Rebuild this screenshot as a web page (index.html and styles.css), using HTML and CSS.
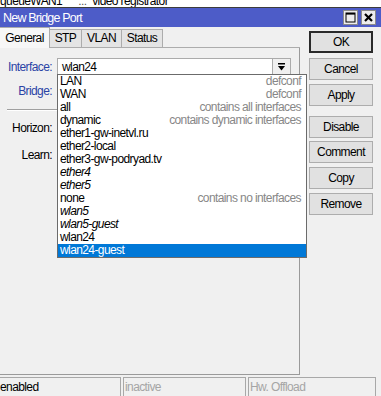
FILE: index.html
```html
<!DOCTYPE html>
<html lang="en">
<head>
  <meta charset="UTF-8">
  <title>New Bridge Port</title>
  <link rel="stylesheet" href="styles.css">
</head>
<body>
  <!-- window behind, only a sliver is visible -->
  <div class="backdrop">
    <span class="bg-name">queueWAN1</span><span class="bg-dots">:::</span><span class="bg-comment">video registrator</span>
  </div>

  <div class="window">
    <!-- Title bar -->
    <div class="titlebar">
      <span class="title">New Bridge Port</span>
      <div class="title-btns">
        <span class="tbtn">
          <svg width="11" height="11" viewBox="0 0 11 11"><rect x="1" y="1" width="9" height="9" fill="none" stroke="#000" stroke-width="1"/><line x1="1" y1="1.8" x2="10" y2="1.8" stroke="#000" stroke-width="1.6"/></svg>
        </span>
        <span class="tbtn">
          <svg width="11" height="11" viewBox="0 0 11 11"><path d="M2 2 L9 9 M9 2 L2 9" stroke="#000" stroke-width="2.2"/></svg>
        </span>
      </div>
    </div>

    <div class="main">
      <div class="left">
        <!-- Tabs -->
        <div class="tabs">
          <div class="tab active tab-general">General</div>
          <div class="tab tab-stp">STP</div>
          <div class="tab tab-vlan">VLAN</div>
          <div class="tab tab-status">Status</div>
          <div class="tab-fill"></div>
        </div>

        <!-- General tab -->
        <div class="panel">
          <div class="row row-interface">
            <label class="lbl blue">Interface:</label>
            <div class="combo">
              <div class="field">wlan24</div>
              <div class="drop">
                <svg width="9" height="9" viewBox="0 0 9 9"><rect x="1" y="0" width="7" height="1.5" fill="#000"/><path d="M1 3 L8 3 L4.5 7.5 Z" fill="#000"/></svg>
              </div>
            </div>
          </div>
          <div class="row row-bridge">
            <label class="lbl blue">Bridge:</label>
            <div class="combo">
              <div class="field"></div>
              <div class="drop"></div>
            </div>
          </div>
          <div class="sep"></div>
          <div class="row row-horizon">
            <label class="lbl">Horizon:</label>
            <div class="field short"></div>
          </div>
          <div class="row">
            <label class="lbl">Learn:</label>
            <div class="field short"></div>
          </div>

          <!-- open interface list -->
          <ul class="iface-list">
            <li class="iface"><span>LAN</span><span class="note">defconf</span></li>
            <li class="iface"><span>WAN</span><span class="note">defconf</span></li>
            <li class="iface"><span>all</span><span class="note">contains all interfaces</span></li>
            <li class="iface"><span>dynamic</span><span class="note">contains dynamic interfaces</span></li>
            <li class="iface"><span>ether1-gw-inetvl.ru</span></li>
            <li class="iface"><span>ether2-local</span></li>
            <li class="iface"><span>ether3-gw-podryad.tv</span></li>
            <li class="iface slave"><span>ether4</span></li>
            <li class="iface slave"><span>ether5</span></li>
            <li class="iface"><span>none</span><span class="note">contains no interfaces</span></li>
            <li class="iface slave"><span>wlan5</span></li>
            <li class="iface slave"><span>wlan5-guest</span></li>
            <li class="iface"><span>wlan24</span></li>
            <li class="iface selected"><span>wlan24-guest</span></li>
          </ul>
        </div>
      </div>

      <!-- Dialog buttons -->
      <div class="buttons">
        <div class="btn btn-ok">OK</div>
        <div class="btn btn-cancel">Cancel</div>
        <div class="btn btn-apply">Apply</div>
        <div class="btn btn-disable">Disable</div>
        <div class="btn btn-comment">Comment</div>
        <div class="btn btn-copy">Copy</div>
        <div class="btn btn-remove">Remove</div>
      </div>
    </div>

    <!-- Status bar -->
    <div class="statusbar">
      <div class="status status-enabled">enabled</div>
      <div class="status status-inactive dim">inactive</div>
      <div class="status status-hw dim">Hw. Offload</div>
    </div>
  </div>
</body>
</html>
```

FILE: styles.css
```css
html, body {
  margin: 0;
  padding: 0;
}

body {
  width: 381px;
  height: 396px;
  overflow: hidden;
  background-color: #f0f0f0;
  font-family: "Liberation Sans", Arial, sans-serif;
  font-size: 12px;
  letter-spacing: -0.6px;
  color: #000;
}

/* sliver of the window behind */
.backdrop {
  height: 7px;
  overflow: hidden;
  background-color: #fff;
  white-space: nowrap;
}

.backdrop span {
  display: inline-block;
  line-height: 12px;
  margin-top: -5px;
  vertical-align: top;
}

.bg-dots {
  margin-left: 16px;
  width: 14px;
  color: #555;
}

.window {
  border-top: 1px solid #3c3c3c;
}

.titlebar {
  height: 19px;
  background-color: #4d5cc8;
  display: flex;
  align-items: center;
  justify-content: space-between;
  padding: 0 5px 0 3px;
}

.title {
  color: #fff;
  letter-spacing: -0.8px;
  font-size: 12.5px;
}

.title-btns {
  display: flex;
  gap: 3px;
}

.tbtn {
  width: 15px;
  height: 15px;
  box-sizing: border-box;
  background-color: #ededed;
  border: 1px solid #8a8a8a;
  display: flex;
  align-items: center;
  justify-content: center;
}

.main {
  display: flex;
}

.left {
  width: 300px;
}

/* tabs */
.tabs {
  display: flex;
  align-items: flex-end;
  height: 21px;
}

.tab {
  box-sizing: border-box;
  height: 19px;
  line-height: 17px;
  text-align: center;
  background-color: #e4e4e4;
  border: 1px solid #acacac;
  border-left: none;
}

.tab.active {
  height: 21px;
  line-height: 20px;
  background-color: #f7f7f7;
  border-bottom: none;
}

.tab-general { width: 50px; }
.tab-stp { width: 32px; }
.tab-vlan { width: 40px; }
.tab-status { width: 41px; }

.tab-fill {
  flex: 1;
  border-bottom: 1px solid #acacac;
  border-right: 1px solid #acacac;
  height: 0;
}

.panel {
  position: relative;
  box-sizing: border-box;
  height: 327px;
  padding-top: 10px;
  border-right: 1px solid #9a9a9a;
  border-bottom: 1px solid #9a9a9a;
}

.row {
  display: flex;
  align-items: center;
  height: 18px;
  margin-bottom: 9px;
}

.row-interface {
  margin-bottom: 6px;
}

.lbl {
  box-sizing: border-box;
  width: 57px;
  padding-right: 5px;
  text-align: right;
}

.lbl.blue {
  color: #2a43a5;
}

.combo {
  display: flex;
}

.field {
  box-sizing: border-box;
  width: 216px;
  height: 18px;
  line-height: 16px;
  padding-left: 4px;
  background-color: #fff;
  border: 1px solid #ababab;
}

.field.short {
  width: 234px;
}

.drop {
  box-sizing: border-box;
  width: 18px;
  height: 18px;
  border: 1px solid #ababab;
  border-left: none;
  display: flex;
  align-items: center;
  justify-content: center;
}

.sep {
  height: 0;
  margin: 0 7px 8px 7px;
  border-top: 1px solid #a0a0a0;
  border-bottom: 1px solid #fff;
}

/* open drop-down */
.iface-list {
  position: absolute;
  left: 57px;
  top: 26px;
  z-index: 5;
  box-sizing: border-box;
  width: 250px;
  height: 184px;
  margin: 0;
  padding: 0;
  list-style: none;
  background-color: #fff;
  border: 1px solid #6b6b6b;
}

.iface {
  display: flex;
  justify-content: space-between;
  height: 13px;
  line-height: 13px;
  padding: 0 5px 0 2px;
  white-space: nowrap;
}

.iface.slave {
  font-style: italic;
}

.iface .note {
  color: #878787;
}

.iface.selected {
  background-color: #0078d7;
  color: #fff;
}

/* dialog buttons */
.buttons {
  display: flex;
  flex-direction: column;
  padding: 4px 0 0 9px;
}

.btn {
  box-sizing: border-box;
  width: 64px;
  height: 22px;
  line-height: 20px;
  text-align: center;
  background-color: #e1e1e1;
  border: 1px solid #adadad;
}

.btn-ok {
  border: 2px solid #2a2a2a;
  line-height: 18px;
}

.btn-cancel { margin-top: 5px; }
.btn-apply { margin-top: 4px; }
.btn-disable { margin-top: 10px; }
.btn-comment { margin-top: 3px; }
.btn-copy { margin-top: 4px; }
.btn-remove { margin-top: 4px; }

/* status bar */
.statusbar {
  display: flex;
  gap: 2px;
  margin-top: 2px;
  height: 19px;
}

.status {
  box-sizing: border-box;
  height: 19px;
  line-height: 19px;
  padding-left: 1px;
  border: 1px solid #a8a8a8;
  border-bottom: none;
}

.status-enabled {
  width: 121px;
  border-left: none;
  padding-left: 0;
}

.status-inactive { width: 123px; }
.status-hw { width: 128px; }

.status.dim {
  color: #a5a5a5;
}
```
